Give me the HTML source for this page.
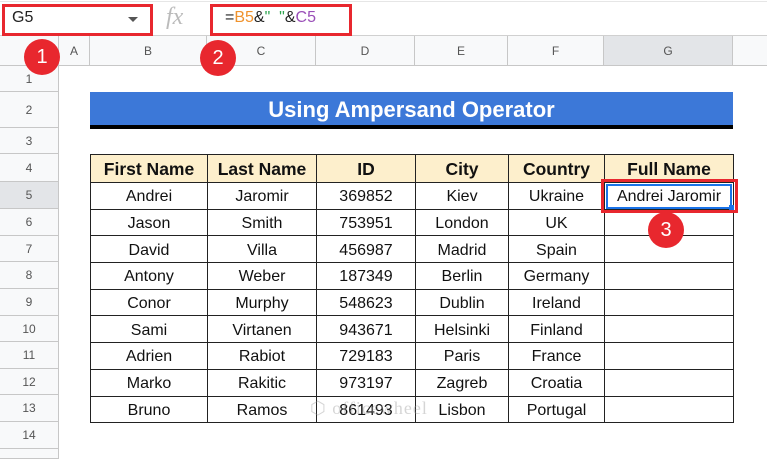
<!DOCTYPE html>
<html><head><style>
*{margin:0;padding:0;box-sizing:border-box}
body{width:767px;height:452px;overflow:hidden;background:#fff;font-family:"Liberation Sans",Arial,sans-serif;position:relative}
.a{position:absolute}
.ch{position:absolute;top:36px;height:30px;background:#f8f9fa;border-right:1px solid #c7c7c7;border-bottom:1px solid #c7c7c7;font-size:12px;color:#555;text-align:center;line-height:30px}
.rh{position:absolute;left:0;width:59px;background:#f8f9fa;border-right:1px solid #c7c7c7;border-bottom:1px solid #c7c7c7;font-size:12px;color:#555;text-align:center}
table{position:absolute;left:90px;top:154px;border-collapse:collapse;font-size:16px;color:#111}
td{border:1.5px solid #222;text-align:center;height:26.7px;padding:3px 0 0 0}
tr.h td{background:#fdefcc;font-weight:bold;font-size:17.5px;height:28px;padding:1px 0 0 0}
.badge{position:absolute;width:36px;height:36px;border-radius:50%;background:#e8272e;color:#fff;font-size:20px;text-align:center;line-height:36px}
.red{position:absolute;border:3px solid #e8272e}
</style></head><body>
<div class="a" style="left:0;top:0;width:767px;height:36px;background:#fff;border-bottom:1px solid #d0d0d0"></div>
<div class="a" style="left:0;top:1px;width:767px;height:1px;background:#e6e6e6"></div>
<div class="a" style="left:12px;top:9px;font-size:16px;color:#222">G5</div>
<div class="a" style="left:128px;top:17px;width:0;height:0;border-left:5px solid transparent;border-right:5px solid transparent;border-top:5px solid #555"></div>
<div class="red" style="left:2px;top:4px;width:151px;height:32px"></div>
<div class="a" style="left:166px;top:4px;font-family:'Liberation Serif',serif;font-style:italic;font-size:24px;color:#bbb">fx</div>
<div class="a" style="left:225px;top:9px;font-size:16px;color:#222">=<span style="color:#f0932e">B5</span>&amp;<span style="color:#2ea44f">"&nbsp;&nbsp;"</span>&amp;<span style="color:#9a4fb8">C5</span></div>
<div class="red" style="left:210px;top:4px;width:142px;height:32px"></div>

<div class="ch" style="left:0;width:59px"></div>
<div class="ch" style="left:59px;width:31px">A</div>
<div class="ch" style="left:90px;width:117px">B</div>
<div class="ch" style="left:207px;width:109px">C</div>
<div class="ch" style="left:316px;width:99px">D</div>
<div class="ch" style="left:415px;width:93px">E</div>
<div class="ch" style="left:508px;width:96px">F</div>
<div class="ch" style="left:604px;width:129px;background:#e3e5e8">G</div>
<div class="ch" style="left:733px;width:34px;border-right:none"></div>

<div class="rh" style="top:66px;height:26px;line-height:26px">1</div>
<div class="rh" style="top:92px;height:36px;line-height:36px">2</div>
<div class="rh" style="top:128px;height:26px;line-height:26px">3</div>
<div class="rh" style="top:154px;height:28px;line-height:28px">4</div>
<div class="rh" style="top:182px;height:27px;line-height:27px;background:#e3e5e8">5</div>
<div class="rh" style="top:209px;height:27px;line-height:27px">6</div>
<div class="rh" style="top:236px;height:26px;line-height:26px">7</div>
<div class="rh" style="top:262px;height:27px;line-height:27px">8</div>
<div class="rh" style="top:289px;height:27px;line-height:27px">9</div>
<div class="rh" style="top:316px;height:26px;line-height:26px">10</div>
<div class="rh" style="top:342px;height:27px;line-height:27px">11</div>
<div class="rh" style="top:369px;height:26px;line-height:26px">12</div>
<div class="rh" style="top:395px;height:27px;line-height:27px">13</div>
<div class="rh" style="top:422px;height:27px;line-height:27px">14</div>
<div class="rh" style="top:449px;height:10px"></div>

<div class="a" style="left:90px;top:92px;width:643px;height:33px;background:#3c78d8;color:#fff;font-weight:bold;font-size:22px;text-align:center;line-height:36px">Using Ampersand Operator</div>
<div class="a" style="left:90px;top:125px;width:643px;height:4px;background:#000"></div>

<table>
<colgroup><col style="width:117px"><col style="width:109px"><col style="width:99px"><col style="width:93px"><col style="width:96px"><col style="width:129px"></colgroup>
<tr class="h"><td>First Name</td><td>Last Name</td><td>ID</td><td>City</td><td>Country</td><td>Full Name</td></tr>
<tr><td>Andrei</td><td>Jaromir</td><td>369852</td><td>Kiev</td><td>Ukraine</td><td>Andrei Jaromir</td></tr>
<tr><td>Jason</td><td>Smith</td><td>753951</td><td>London</td><td>UK</td><td></td></tr>
<tr><td>David</td><td>Villa</td><td>456987</td><td>Madrid</td><td>Spain</td><td></td></tr>
<tr><td>Antony</td><td>Weber</td><td>187349</td><td>Berlin</td><td>Germany</td><td></td></tr>
<tr><td>Conor</td><td>Murphy</td><td>548623</td><td>Dublin</td><td>Ireland</td><td></td></tr>
<tr><td>Sami</td><td>Virtanen</td><td>943671</td><td>Helsinki</td><td>Finland</td><td></td></tr>
<tr><td>Adrien</td><td>Rabiot</td><td>729183</td><td>Paris</td><td>France</td><td></td></tr>
<tr><td>Marko</td><td>Rakitic</td><td>973197</td><td>Zagreb</td><td>Croatia</td><td></td></tr>
<tr><td>Bruno</td><td>Ramos</td><td>861493</td><td>Lisbon</td><td>Portugal</td><td></td></tr>
</table>
<div class="a" style="left:606px;top:184px;width:126px;height:25px;border:2px solid #1a73e8"></div>
<div class="a" style="left:729px;top:205px;width:5px;height:5px;background:#1a73e8"></div>
<div class="red" style="left:601px;top:179px;width:137px;height:34px"></div>
<div class="a" style="left:310px;top:398px;font-size:18px;color:rgba(150,150,150,.4);letter-spacing:1px;font-family:'Liberation Serif',serif">⬡ officewheel</div>

<div class="badge" style="left:24px;top:39px">1</div>
<div class="badge" style="left:200px;top:40px">2</div>
<div class="badge" style="left:648px;top:212px">3</div>
</body></html>
